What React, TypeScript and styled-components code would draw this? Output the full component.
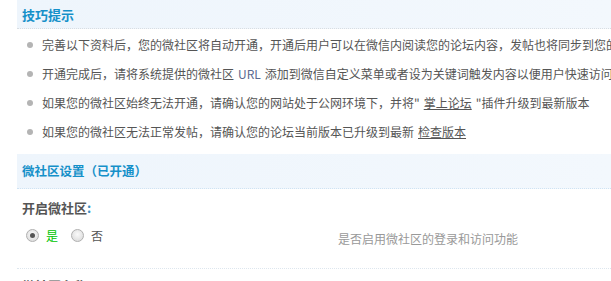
import React from "react";
import styled, { createGlobalStyle } from "styled-components";

const Global = createGlobalStyle`
  html, body { margin: 0; padding: 0; background: #fff; }
  body {
    font-family: "Noto Sans CJK SC", "Liberation Sans", sans-serif;
    font-size: 12px;
    color: #555;
    overflow: hidden;
  }
`;

const Page = styled.div`
  margin-left: 17px;
  width: 594px;
  overflow: hidden;
`;

const SectionHead = styled.div<{ $tall?: boolean }>`
  height: ${(p) => (p.$tall ? 35 : 29)}px;
  box-sizing: border-box;
  display: flex;
  align-items: center;
  padding-left: 5px;
  background: linear-gradient(to right, #eef5fc, #f3f8fd);
  border-bottom: 1px dotted ${(p) => (p.$tall ? "#cfe3f3" : "#d8dde2")};
  color: #1590c9;
  font-weight: bold;
  font-size: ${(p) => (p.$tall ? 12.5 : 13)}px;
  line-height: 1;
  white-space: nowrap;
`;

const TipList = styled.ul`
  list-style: none;
  margin: 0;
  padding: 1px 0 8px 0;
`;

const Tip = styled.li`
  display: flex;
  align-items: center;
  height: 29px;
  white-space: nowrap;
  color: #555;
  font-size: 12px;
`;

const Dot = styled.span`
  flex: none;
  width: 6px;
  height: 6px;
  border-radius: 50%;
  background: #b4b4b4;
  margin: 0 9px 0 10px;
`;

const Link = styled.a`
  color: #555;
  text-decoration: underline;
  margin: 0 4px;
`;

const Url = styled.span`
  color: #5a6a90;
  margin: 0 4px;
`;

const Label = styled.div`
  padding: 12px 0 0 5px;
  height: 14px;
  line-height: 14px;
  font-weight: bold;
  font-size: 13px;
  color: #555;
`;

const Colon = styled.span`
  color: #3b8fc0;
`;

const OptionRow = styled.div`
  display: grid;
  grid-template-columns: 321px 1fr;
  align-items: center;
  height: 54px;
  border-bottom: 1px dotted #dde6ee;
  box-sizing: border-box;
  padding-bottom: 13px;
`;

const Radios = styled.div`
  display: flex;
  align-items: center;
  padding-left: 9px;
`;

const RadioLabel = styled.label<{ $on?: boolean }>`
  display: flex;
  align-items: center;
  margin-right: 13px;
  color: ${(p) => (p.$on ? "#00c400" : "#555")};
  font-size: 12px;
`;

const RadioBox = styled.input`
  appearance: none;
  -webkit-appearance: none;
  width: 13px;
  height: 13px;
  margin: 0 7px 0 0;
  border-radius: 50%;
  border: 1px solid #b0b0b0;
  box-sizing: border-box;
  background: radial-gradient(circle at 50% 40%, #fafafa, #d6d6d6);
  position: relative;
  &:checked::after {
    content: "";
    position: absolute;
    left: 3px;
    top: 3px;
    width: 5px;
    height: 5px;
    border-radius: 50%;
    background: #555;
  }
`;

const Desc = styled.div`
  color: #999;
  font-size: 12px;
  padding-top: 7px;
`;

const NextLabel = styled.div`
  padding: 7px 0 0 5px;
  font-weight: bold;
  font-size: 13px;
  color: #555;
`;

export default function App() {
  return (
    <>
      <Global />
      <Page>
        <SectionHead>技巧提示</SectionHead>
        <TipList>
          <Tip>
            <Dot />
            完善以下资料后，您的微社区将自动开通，开通后用户可以在微信内阅读您的论坛内容，发帖也将同步到您的论坛
          </Tip>
          <Tip>
            <Dot />
            开通完成后，请将系统提供的微社区<Url>URL</Url>添加到微信自定义菜单或者设为关键词触发内容以便用户快速访问
          </Tip>
          <Tip>
            <Dot />
            如果您的微社区始终无法开通，请确认您的网站处于公网环境下，并将"<Link href="#">掌上论坛</Link>"插件升级到最新版本
          </Tip>
          <Tip>
            <Dot />
            如果您的微社区无法正常发帖，请确认您的论坛当前版本已升级到最新<Link href="#">检查版本</Link>
          </Tip>
        </TipList>
        <SectionHead $tall>微社区设置（已开通）</SectionHead>
        <Label>
          开启微社区<Colon>:</Colon>
        </Label>
        <OptionRow>
          <Radios>
            <RadioLabel $on>
              <RadioBox type="radio" name="open" defaultChecked />是
            </RadioLabel>
            <RadioLabel>
              <RadioBox type="radio" name="open" />否
            </RadioLabel>
          </Radios>
          <Desc>是否启用微社区的登录和访问功能</Desc>
        </OptionRow>
        <NextLabel>微社区名称:</NextLabel>
      </Page>
    </>
  );
}
